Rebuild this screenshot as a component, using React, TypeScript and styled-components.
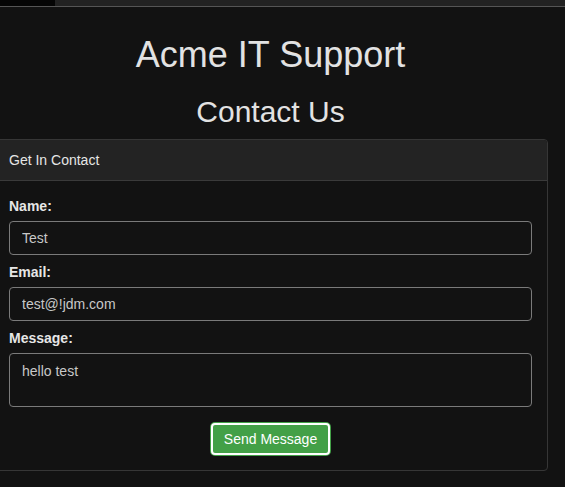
import React from "react";
import styled, { createGlobalStyle } from "styled-components";

const Global = createGlobalStyle`
  html, body { margin: 0; padding: 0; background: #121212; }
  body { font-family: "Liberation Sans", Arial, sans-serif; color: #dedede; overflow: hidden; }
  * { box-sizing: border-box; }
`;

const TopBar = styled.div`
  height: 7px;
  background: #222;
  border-bottom: 1px solid #555;
  display: flex;
`;

const TopTab = styled.div`
  width: 55px;
  height: 6px;
  background: #050505;
`;

const Container = styled.div`
  margin-left: -7px;
  width: 555px;
  display: flex;
  flex-direction: column;
  align-items: stretch;
`;

const Title = styled.h1`
  margin: 27px 0 0;
  font-size: 36px;
  line-height: 42px;
  font-weight: 400;
  text-align: center;
  color: #e2e2e2;
`;

const SubTitle = styled.h2`
  margin: 19px 0 0;
  font-size: 30px;
  line-height: 34px;
  font-weight: 400;
  text-align: center;
  color: #e2e2e2;
`;

const Card = styled.section`
  margin-top: 10px;
  border: 1px solid #363636;
  border-radius: 4px;
  overflow: hidden;
`;

const CardHeader = styled.div`
  height: 41px;
  padding: 0 15px;
  display: flex;
  align-items: center;
  background: #232323;
  border-bottom: 1px solid #3a3a3a;
  font-size: 14px;
  color: #e6e6e6;
`;

const CardBody = styled.form`
  padding: 17px 15px 14px;
  display: flex;
  flex-direction: column;
`;

const Group = styled.div`
  display: flex;
  flex-direction: column;
  margin-bottom: 9px;
`;

const Label = styled.label`
  font-size: 14px;
  line-height: 17px;
  font-weight: 700;
  color: #e6e6e6;
  margin-bottom: 6px;
`;

const Input = styled.input`
  height: 34px;
  width: 100%;
  padding: 0 12px;
  background: #121212;
  border: 1px solid #7a7a7a;
  border-radius: 4px;
  color: #c8c8c8;
  font-family: inherit;
  font-size: 14px;
  outline: none;
`;

const TextArea = styled.textarea`
  height: 54px;
  width: 100%;
  padding: 7px 12px;
  background: #121212;
  border: 1px solid #7a7a7a;
  border-radius: 4px;
  color: #c8c8c8;
  font-family: inherit;
  font-size: 14px;
  line-height: 20px;
  resize: none;
  outline: none;
`;

const Actions = styled.div`
  display: flex;
  justify-content: center;
  margin-top: 6px;
`;

const SendButton = styled.button`
  height: 32px;
  margin: 1px 0;
  padding: 0 10.5px;
  background: #43a047;
  color: #fff;
  border: 2px solid #fff;
  border-radius: 4px;
  box-shadow: 0 0 0 1px #43a047;
  font-family: inherit;
  font-size: 14px;
  cursor: pointer;
`;

export default function App() {
  return (
    <>
      <Global />
      <TopBar>
        <TopTab />
      </TopBar>
      <Container>
        <Title>Acme IT Support</Title>
        <SubTitle>Contact Us</SubTitle>
        <Card>
          <CardHeader>Get In Contact</CardHeader>
          <CardBody onSubmit={(e) => e.preventDefault()}>
            <Group>
              <Label htmlFor="name">Name:</Label>
              <Input id="name" defaultValue="Test" />
            </Group>
            <Group>
              <Label htmlFor="email">Email:</Label>
              <Input id="email" defaultValue="test@!jdm.com" />
            </Group>
            <Group>
              <Label htmlFor="msg">Message:</Label>
              <TextArea id="msg" defaultValue="hello test" />
            </Group>
            <Actions>
              <SendButton type="submit">Send Message</SendButton>
            </Actions>
          </CardBody>
        </Card>
      </Container>
    </>
  );
}
